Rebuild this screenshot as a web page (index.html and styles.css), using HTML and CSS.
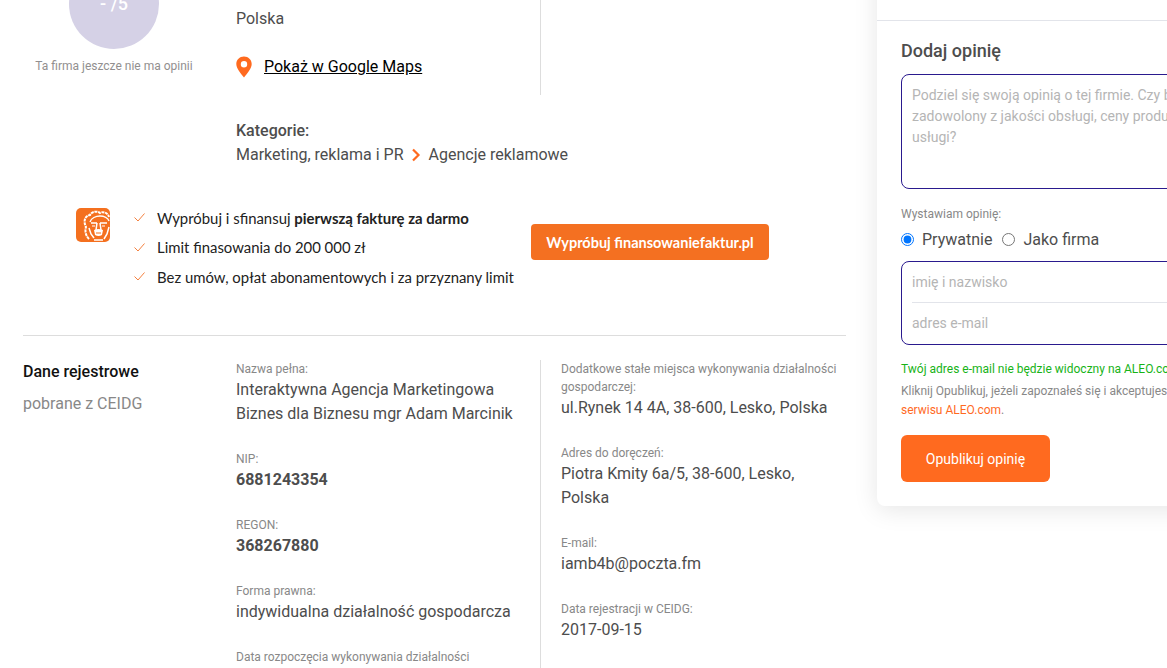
FILE: index.html
```html
<!DOCTYPE html>
<html lang="pl">
<head>
<meta charset="utf-8">
<title>Firma - ALEO</title>
<link rel="stylesheet" href="styles.css">
</head>
<body>
<div class="page">
  <main class="main">
    <section class="top">
      <div class="rating">
        <div class="circle"><span class="score">- /5</span></div>
        <p class="norate">Ta firma jeszcze nie ma opinii</p>
      </div>
      <div class="info">
        <div class="address">
          <p class="country">Polska</p>
          <p class="maps">
            <svg class="pin" viewBox="0 0 16 22" width="16" height="22"><path fill="#ff6a1f" fill-rule="evenodd" d="M8 .5C3.600.5.300 3.900.300 8c0 4.300 4.700 9.800 7.700 13.500C11 17.800 15.700 12.300 15.700 8 15.700 3.900 12.400.5 8 .5zM8 5a3.200 3.200 0 1 1 0 6.400A3.200 3.200 0 0 1 8 5z"/></svg>
            <a class="mapslink" href="#">Pokaż w Google Maps</a>
          </p>
        </div>
        <div class="cats">
          <p class="catlabel">Kategorie:</p>
          <p class="catline">Marketing, reklama i PR
            <svg class="chev" viewBox="0 0 10 14" width="10" height="14"><path d="M2 1.500 7.500 7 2 12.500" fill="none" stroke="#ff6a1f" stroke-width="2.200"/></svg>
            Agencje reklamowe</p>
        </div>
      </div>
    </section>

    <section class="promo">
      <svg class="lion" viewBox="0 0 34 34" width="34" height="34">
        <rect width="34" height="34" rx="5" fill="#f4701f"/>
        <g fill="none" stroke="#fff" stroke-linecap="butt">
          <path stroke-width="2" stroke-dasharray="3 .7" d="M13 31C9 27 9 22 10 19 7 13 9 8 14 7 16 3 22 3 24 5 27 3 32 5 33 9"/>
          <path stroke-width="1.400" d="M14 14C15 10 20 8 24 8 28 8 32 10 33 13"/>
          <path stroke-width="1.500" d="M15 15h6M24 15h7M21 15l-1 7M24 15l1 7"/>
          <path stroke-width="1.200" d="M16 18h3M26 18h3"/>
          <path stroke-width="1.500" d="M13 20l2 6 3 4M33 19l-2 7-3 5M18 32h9"/>
        </g>
        <path d="M18 22Q22.500 20 27 22L26 27Q22.500 29 19 27z" fill="#fff"/>
        <path d="M20 25h5" stroke="#f4701f" stroke-width="1" fill="none"/>
      </svg>
      <ul class="checks">
        <li class="check"><svg class="tick" viewBox="0 0 11 9" width="11" height="9"><path d="M.5 4.500 4 8 10.500.5" fill="none" stroke="#f4803f" stroke-width="1"/></svg><span>Wypróbuj i sfinansuj <b class="strong">pierwszą fakturę za darmo</b></span></li>
        <li class="check"><svg class="tick" viewBox="0 0 11 9" width="11" height="9"><path d="M.5 4.500 4 8 10.500.5" fill="none" stroke="#f4803f" stroke-width="1"/></svg><span>Limit finasowania do 200 000 zł</span></li>
        <li class="check"><svg class="tick" viewBox="0 0 11 9" width="11" height="9"><path d="M.5 4.500 4 8 10.500.5" fill="none" stroke="#f4803f" stroke-width="1"/></svg><span>Bez umów, opłat abonamentowych i za przyznany limit</span></li>
      </ul>
      <a class="promobtn" href="#">Wypróbuj finansowaniefaktur.pl</a>
    </section>

    <section class="registry">
      <div class="reghead">
        <h2 class="regtitle">Dane rejestrowe</h2>
        <p class="regsub">pobrane z CEIDG</p>
      </div>
      <div class="regcol regcol-left">
        <div class="item"><div class="label">Nazwa pełna:</div><div class="value">Interaktywna Agencja Marketingowa Biznes dla Biznesu mgr Adam Marcinik</div></div>
        <div class="item"><div class="label">NIP:</div><div class="value bold">6881243354</div></div>
        <div class="item"><div class="label">REGON:</div><div class="value bold">368267880</div></div>
        <div class="item"><div class="label">Forma prawna:</div><div class="value">indywidualna działalność gospodarcza</div></div>
        <div class="item"><div class="label">Data rozpoczęcia wykonywania działalności</div></div>
      </div>
      <div class="regcol regcol-right">
        <div class="item"><div class="label">Dodatkowe stałe miejsca wykonywania działalności gospodarczej:</div><div class="value">ul.Rynek 14 4A, 38-600, Lesko, Polska</div></div>
        <div class="item"><div class="label">Adres do doręczeń:</div><div class="value">Piotra Kmity 6a/5, 38-600, Lesko, Polska</div></div>
        <div class="item"><div class="label">E-mail:</div><div class="value">iamb4b@poczta.fm</div></div>
        <div class="item"><div class="label">Data rejestracji w CEIDG:</div><div class="value">2017-09-15</div></div>
      </div>
    </section>
  </main>

  <aside class="card">
    <div class="cardtop"></div>
    <form class="form">
      <h2 class="formtitle">Dodaj opinię</h2>
      <textarea class="opinion" placeholder="Podziel się swoją opinią o tej firmie. Czy byłeś&#10;zadowolony z jakości obsługi, ceny produktów i&#10;usługi?"></textarea>
      <p class="as">Wystawiam opinię:</p>
      <div class="radios">
        <label class="radio"><input class="radioinput" type="radio" name="as" checked>Prywatnie</label>
        <label class="radio"><input class="radioinput" type="radio" name="as">Jako firma</label>
      </div>
      <div class="fields">
        <input class="field field-first" type="text" placeholder="imię i nazwisko">
        <input class="field field-last" type="text" placeholder="adres e-mail">
      </div>
      <p class="green">Twój adres e-mail nie będzie widoczny na ALEO.com</p>
      <p class="terms">Kliknij Opublikuj, jeżeli zapoznałeś się i akceptujesz regulamin<br><a class="termslink" href="#">serwisu ALEO.com</a>.</p>
      <button class="submit" type="button">Opublikuj opinię</button>
    </form>
  </aside>
</div>
</body>
</html>
```
FILE: styles.css
```css
* { box-sizing: border-box; }
html, body { margin: 0; padding: 0; height: 668px; overflow: hidden; background: #fff; }
body { font-family: Roboto, "Liberation Sans", sans-serif; color: #4d4d4d; font-size: 16px; }
p, h2, ul { margin: 0; padding: 0; }

.page { display: flex; align-items: flex-start; margin-top: -60px; padding-left: 23px; width: 1500px; }
.main { width: 823px; flex: none; }

.top { display: flex; }
.rating { width: 213px; flex: none; padding-top: 19px; padding-right: 31px; display: flex; flex-direction: column; align-items: center; }
.circle { width: 90px; height: 90px; border-radius: 50%; background: #d5d1e6; display: flex; justify-content: center; padding-top: 33px; }
.score { color: #fff; font-size: 18px; line-height: 24px; font-weight: 500; }
.norate { font-size: 12px; line-height: 18px; color: #928f8f; margin-top: 8px; }

.info { flex: 1; }
.address { width: 305px; height: 155px; border-right: 1px solid #ddd; padding-top: 67px; }
.country { line-height: 24px; }
.maps { display: flex; align-items: center; gap: 12px; margin-top: 23px; height: 24px; }
.pin { flex: none; margin-top: 2px; }
.mapslink { color: #000; text-decoration: underline; }
.cats { margin-top: 24px; line-height: 24px; }
.catlabel { font-weight: 500; }
.catline { display: flex; align-items: center; gap: 7px; }
.chev { flex: none; margin-right: 1px; }

.promo { display: flex; align-items: flex-start; margin-top: 36px; height: 89px; padding-left: 53px; }
.lion { flex: none; margin-top: 5px; margin-right: 24px; }
.checks { list-style: none; width: 397px; font-family: Lato, sans-serif; color: #222; font-size: 14.900px; flex: none; }
.check { display: flex; align-items: center; gap: 12px; height: 29.500px; }
.tick { flex: none; }
.strong { font-weight: 700; }
.promobtn { width: 238px; height: 36px; margin-top: 21px; background: #f47021; border-radius: 4px; color: #fff; font-family: Lato, sans-serif; font-weight: 700; font-size: 14.500px; display: flex; align-items: center; justify-content: center; text-decoration: none; }

.registry { display: flex; margin-top: 43px; border-top: 1px solid #ddd; padding-top: 24px; }
.reghead { width: 213px; flex: none; }
.regtitle { font-size: 16px; line-height: 24px; font-weight: 500; color: #111; }
.regsub { line-height: 24px; color: #888; margin-top: 8px; }
.regcol-left { width: 305px; flex: none; border-right: 1px solid #ddd; padding-right: 20px; height: 400px; }
.regcol-right { padding-left: 20px; width: 305px; flex: none; }
.item { margin-bottom: 24px; }
.label { font-size: 12px; line-height: 18px; color: #888; }
.value { line-height: 24px; color: #4d4d4d; }
.bold { font-weight: 700; }

.card { flex: none; width: 420px; margin-left: 31px; margin-top: -39px; height: 605px; background: #fff; border-radius: 8px; box-shadow: 0 4px 24px rgba(0,0,0,.1); }
.cardtop { height: 120px; border-bottom: 1px solid #e2e4ea; }
.form { padding: 18px 24px 0; }
.formtitle { font-size: 18px; line-height: 24px; font-weight: 500; color: #4d4d4d; }
.opinion { display: block; width: 100%; height: 115px; margin-top: 11px; padding: 10px; border: 1px solid #2a1a8e; border-radius: 8px; font-family: inherit; font-size: 14px; line-height: 21px; resize: none; outline: 0; }
.opinion::placeholder, .field::placeholder { color: #b5b5b5; opacity: 1; }
.as { font-size: 12px; line-height: 18px; color: #888; margin-top: 16px; }
.radios { display: flex; gap: 10px; height: 24px; margin-top: 4px; }
.radio { display: flex; align-items: center; gap: 8px; }
.radioinput { margin: 0; width: 13px; height: 13px; }
.fields { margin-top: 10px; height: 84px; border: 1px solid #2a1a8e; border-radius: 8px; padding: 0 10px; display: flex; flex-direction: column; }
.field { height: 41px; border: 0; padding: 0; font-family: inherit; font-size: 14px; outline: 0; background: transparent; }
.field-first { border-bottom: 1px solid #e2e4ea; }
.field-last { height: 39px; }
.green { font-size: 12px; line-height: 18px; color: #17b317; margin-top: 15px; white-space: nowrap; }
.terms { font-size: 12px; line-height: 19px; color: #888; margin-top: 4px; white-space: nowrap; }
.termslink { color: #ff6a1f; text-decoration: none; }
.submit { display: block; width: 149px; height: 47px; margin-top: 15px; border: 0; border-radius: 6px; background: #ff6a1f; color: #fff; font-family: inherit; font-size: 14px; }
```
